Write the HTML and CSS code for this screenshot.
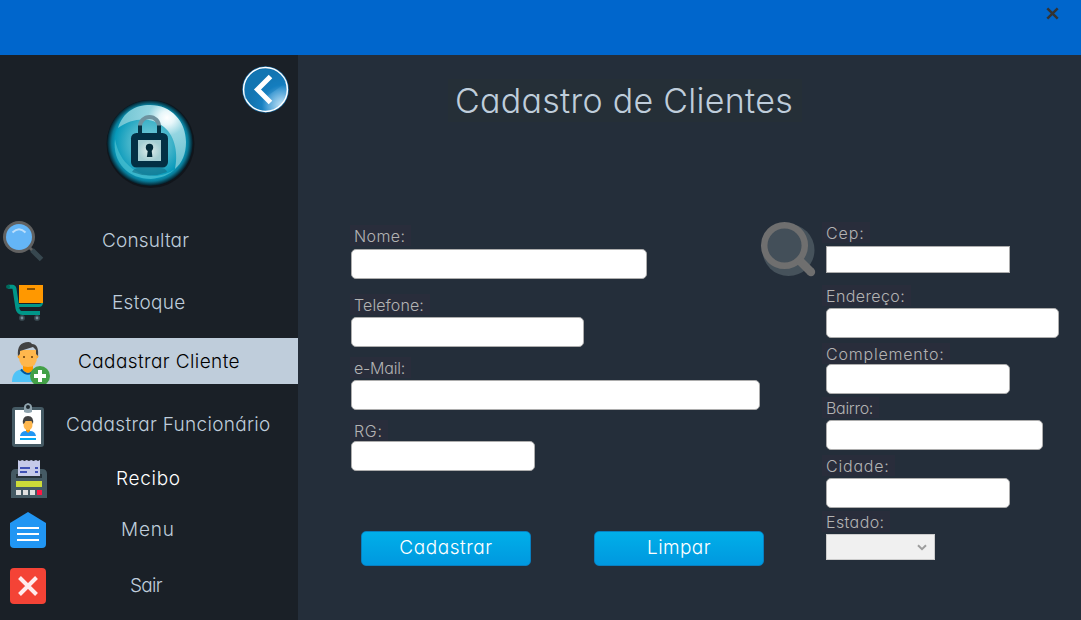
FILE: index.html
```html
<!DOCTYPE html>
<html lang="pt-BR">
<head>
<meta charset="utf-8">
<title>Cadastro de Clientes</title>
<link rel="stylesheet" href="styles.css">
</head>
<body>
<header class="titlebar">
  <svg class="close" viewBox="0 0 12 12"><path d="M1.2 1.2L10.8 10.8M10.8 1.2L1.2 10.8"/></svg>
</header>
<div class="layout">
  <aside class="sidebar">
    <div class="brand">
      <svg class="brand-art" viewBox="90 55 208 160">
        <defs>
          <radialGradient id="orb" cx=".5" cy=".5" r=".5"><stop offset="0" stop-color="#7fd0dc"/><stop offset=".5" stop-color="#41b3c9"/><stop offset=".82" stop-color="#0799ba"/><stop offset=".89" stop-color="#087b98"/><stop offset="1" stop-color="#061923"/></radialGradient>
          <radialGradient id="shine" cx=".72" cy=".2" r=".7"><stop offset="0" stop-color="#fff"/><stop offset=".15" stop-color="#e8f7fa"/><stop offset=".4" stop-color="#94d5e1"/><stop offset="1" stop-color="#6fc4d2"/></radialGradient>
          <radialGradient id="plate"><stop offset="0" stop-color="#e2eeec"/><stop offset="1" stop-color="#a3cdd2"/></radialGradient>
          <radialGradient id="back" cx=".88" cy=".86" r=".75"><stop offset="0" stop-color="#c5e5f8"/><stop offset=".45" stop-color="#4ca1d6"/><stop offset=".62" stop-color="#1780c1"/><stop offset="1" stop-color="#1372ac"/></radialGradient>
        </defs>
        <circle cx="150.500" cy="144" r="44" fill="#11151b"/>
        <circle cx="150" cy="143" r="43" fill="url(#orb)"/>
        <path d="M118 128C123 112 135 105 150 105C171 105 186 121 186 142C186 154 182 163 175 169C178 155 176 137 164 127C151 117 134 117 118 128Z" fill="url(#shine)"/>
        <path d="M115 139C112 163 129 179 151 179C161 178 169 175 175 169C155 184 121 174 115 139Z" fill="#49bfd0" opacity=".75"/>
        <path d="M132 172Q134 168 139 168H160Q166 168 167 172Q150 179 132 172Z" fill="#11718a" opacity=".65"/>
        <path d="M140 126.500A9.500 9.500 0 0 1 159 126.500" fill="none" stroke="#6e929f" stroke-width="4"/>
        <path d="M140 134V125.500M159 134V125.500" stroke="#033244" stroke-width="4"/>
        <rect x="131" y="133" width="37" height="34.500" rx="5.500" fill="#033044"/>
        <rect x="138" y="140" width="23" height="21" fill="url(#plate)"/>
        <circle cx="149.500" cy="147.500" r="3.700" fill="#032b3a"/><path d="M148 149h3.500l.9 8h-5.500z" fill="#032b3a"/>
        <circle cx="265.500" cy="89.500" r="23.300" fill="#176aa2"/>
        <circle cx="265.500" cy="89.500" r="21.900" fill="url(#back)" stroke="#fff" stroke-width="1.500"/>
        <path d="M244.500 98C253 105 270 96 286 82A22 22 0 0 0 245 84Z" fill="#117abc" opacity=".4"/>
        <path d="M270.500 76.500L257.500 89.500L270.500 102.500" fill="none" stroke="#fff" stroke-width="5"/>
      </svg>
    </div>
    <nav class="menu">
      <a class="item consultar"><svg class="icon" viewBox="0 215 52 50"><path d="M29 247l4 4" stroke="#616161" stroke-width="3"/><path d="M32 250L41.500 259.500" stroke="#37474f" stroke-width="5"/><circle cx="19" cy="237" r="16" fill="#616161"/><circle cx="19" cy="237" r="13" fill="#64b5f6"/><path d="M12.500 232.500Q19 226 25.500 232.500" fill="none" stroke="#bbdefb" stroke-width="2"/></svg><span class="text">Consultar</span></a>
      <a class="item estoque"><svg class="icon" viewBox="0 277 52 50"><path d="M8 286.800h4.500q1.500 0 2 2L17.500 308.500q.8 4.500 5 4.500H40" fill="none" stroke="#009688" stroke-width="4"/><path d="M18 304h21q3 0 4-4v3.500q-1 3.500-4 3.500H18z" fill="#009688"/><circle cx="8" cy="286.800" r="2" fill="#00695c"/><path d="M19 285h24v18H19z" fill="#ff9800"/><path d="M27 288h8v2h-8z" fill="#8a5000"/><circle cx="22" cy="318" r="3" fill="#37474f"/><circle cx="37" cy="318" r="3" fill="#37474f"/><circle cx="22" cy="318" r="1.400" fill="#78909c"/><circle cx="37" cy="318" r="1.400" fill="#78909c"/></svg><span class="text">Estoque</span></a>
      <a class="item cliente active"><svg class="icon" viewBox="0 338 52 46"><path d="M12 382Q12 370 23 369h10q11 1 11 13z" fill="#4fc3f7"/><path d="M21 369.500Q28 378 35 369.500" fill="none" stroke="#01579b" stroke-width="2"/><path d="M23 363h10v7q-5 6-10 0z" fill="#ff9800"/><path d="M19 350h18v7q0 10-9 10t-9-10z" fill="#ffb74d"/><path d="M17.500 355.500h2v3q-2 0-2-3m19 0h2q0 3-2 3z" fill="#ffa726"/><path d="M18 356q-1.500-14 10.500-14q2.500 0 3.500 2q7 0 6 12l-2-2v-4l-3-3-13 4v3z" fill="#424242"/><path d="M23 356h2v2h-2zm8 0h2v2h-2z" fill="#8a5a1c"/><circle cx="40" cy="376" r="10" fill="#43a047"/><path d="M38 370h4v4h4v4h-4v4h-4v-4h-4v-4h4z" fill="#fff"/></svg><span class="text">Cadastrar Cliente</span></a>
      <a class="item funcionario"><svg class="icon" viewBox="0 400 52 48"><rect x="12" y="407" width="32" height="40" rx="3" fill="#455a64"/><path d="M15 410h26v34H15z" fill="#fff"/><path d="M24 412v-5q0-3 4-4q4 1 4 4v5q-4 2-8 0z" fill="#90a4ae"/><circle cx="28" cy="407" r="2" fill="#1f2930"/><path d="M20 436q1-5 6-5h4q5 0 6 5z" fill="#2196f3"/><path d="M26 427h4v4l-2 2-2-2z" fill="#ff9800"/><path d="M23.500 420h9v4q0 6-4.500 6t-4.500-6z" fill="#ffb74d"/><path d="M23 424q-1-8 5-8q6 0 5 8l-1.500-3-6 0-1 2z" fill="#424242"/><path d="M20 438h16v2H20z" fill="#03a9f4"/></svg><span class="text">Cadastrar Funcionário</span></a>
      <a class="item recibo"><svg class="icon" viewBox="0 454 52 48"><path d="M11 498v-24q0-5 5-5h26q5 0 5 5v24z" fill="#455a64"/><path d="M16 474h26v4H16z" fill="#263238"/><path d="M18 460l2 1 2.200-1 2.300 1 2.200-1 2.300 1 2.200-1 2.300 1 2.500-1 2 1 2-1v16H18z" fill="#c5cae9"/><path d="M20 467h10v2H20zm15 0h3v2h-3zm-15 4h7v2h-7zm15 0h3v2h-3z" fill="#3f51b5"/><path d="M16 481h26v6H16z" fill="#cddc39"/><path d="M16 490h5v5h-5zm7 0h5v5h-5zm7 0h5v5h-5z" fill="#e0e0e0"/><path d="M37 490h5v5h-5z" fill="#ff1744"/></svg><span class="text">Recibo</span></a>
      <a class="item inicio"><svg class="icon" viewBox="0 505 52 48"><path d="M28 512l18 11v21q0 4-4 4H14q-4 0-4-4v-21z" fill="#2196f3"/><path d="M17 527h22v2H17zm0 6h22v2H17zm0 6h22v2H17z" fill="#fff"/></svg><span class="text">Menu</span></a>
      <a class="item sair"><svg class="icon" viewBox="0 561 52 48"><rect x="10" y="568" width="36" height="36" rx="4" fill="#f44336"/><path d="M19.500 577.500l17 17m0-17l-17 17" stroke="#ffebee" stroke-width="4"/></svg><span class="text">Sair</span></a>
    </nav>
  </aside>
  <main class="main">
    <h1 class="title"><span class="text">Cadastro de Clientes</span></h1>
    <div class="form">
      <section class="left">
        <div class="field nome"><label class="label"><span class="text">Nome:</span></label><input class="input"></div>
        <div class="field telefone"><label class="label"><span class="text">Telefone:</span></label><input class="input"></div>
        <div class="field email"><label class="label"><span class="text">e-Mail:</span></label><input class="input"></div>
        <div class="field rg"><label class="label"><span class="text">RG:</span></label><input class="input"></div>
        <div class="actions"><button class="button cadastrar"><span class="text">Cadastrar</span></button><button class="button limpar"><span class="text">Limpar</span></button></div>
      </section>
      <svg class="search" viewBox="760 221 56 56"><circle cx="788.500" cy="250" r="26" fill="#46525b"/><circle cx="784.500" cy="245.500" r="20.300" fill="#434f59" stroke="#6f6f6f" stroke-width="6.500"/><path d="M799 260L811 272" stroke="#6f6f6f" stroke-width="8.500"/><circle cx="811" cy="272" r="4.200" fill="#6f6f6f"/></svg>
      <section class="right">
        <div class="field cep"><label class="label"><span class="text">Cep:</span></label><input class="input"></div>
        <div class="field endereco"><label class="label"><span class="text">Endereço:</span></label><input class="input"></div>
        <div class="field complemento"><label class="label"><span class="text">Complemento:</span></label><input class="input"></div>
        <div class="field bairro"><label class="label"><span class="text">Bairro:</span></label><input class="input"></div>
        <div class="field cidade"><label class="label"><span class="text">Cidade:</span></label><input class="input"></div>
        <div class="field estado"><label class="label"><span class="text">Estado:</span></label><div class="select"><svg class="chevron" viewBox="0 0 10 7"><path d="M1 1.200L5 5.200L9 1.200"/></svg></div></div>
      </section>
    </div>
  </main>
</div>
</body>
</html>
```
FILE: styles.css
```css
* { box-sizing: border-box; }
body { margin: 0; width: 1081px; height: 620px; overflow: hidden; background: #242e3a; font-family: "Century Gothic", Inter, sans-serif; font-weight: 300; font-feature-settings: "cv11" 1; }
.text { display: block; white-space: nowrap; }
.titlebar { height: 55px; background: #0066cc; display: flex; justify-content: flex-end; padding: 7px 22px 0 0; }
.close { width: 13px; height: 13px; fill: none; stroke: #333; stroke-width: 2.3; }
.layout { display: grid; grid-template-columns: 298px 783px; height: 565px; }
.sidebar { background: #1a2027; }
.brand { height: 160px; padding-left: 90px; }
.brand-art { display: block; width: 208px; height: 160px; }
.menu { display: flex; flex-direction: column; }
.item { display: flex; align-items: center; height: 48px; color: #bfcddb; font-size: 19px; }
.icon { width: 52px; height: 100%; flex: none; }
.consultar { height: 50px; letter-spacing: .15px; }
.estoque { height: 50px; margin-top: 12px; letter-spacing: .3px; }
.cliente { height: 46px; margin-top: 11px; letter-spacing: .4px; }
.funcionario { margin-top: 16px; letter-spacing: .3px; }
.recibo { margin-top: 6px; color: #fff; letter-spacing: .7px; }
.inicio { margin-top: 3px; letter-spacing: .8px; }
.sair { margin-top: 8px; letter-spacing: -.7px; }
.active { background: #bfcddb; color: #000; }
.consultar .text { margin-left: 50px; }
.estoque .text { margin-left: 60px; }
.cliente .text { margin-left: 26px; }
.funcionario .text { margin-left: 14px; }
.recibo .text { margin-left: 64px; }
.inicio .text { margin-left: 69px; }
.sair .text { margin-left: 78px; }
.main { padding-top: 24px; }
.title { margin: 0 0 0 150px; width: 354px; height: 43px; padding-left: 7px; background: #252f37; color: #bfcddb; font-size: 34px; font-weight: 300; line-height: 43px; letter-spacing: .28px; }
.form { display: grid; grid-template-columns: 462px 62px 1fr; padding-top: 99px; }
.left { padding: 4px 0 0 52px; }
.right { padding-top: 1px; }
.field { display: flex; flex-direction: column; align-items: flex-start; }
.label { height: 21px; padding-left: 4px; background: #292d3b; color: #b3b3b3; font-size: 16px; line-height: 22px; letter-spacing: .4px; }
.input { width: 184px; height: 30px; margin: 3px 0 0 1px; padding: 0 6px; border: 1px solid #adadad; border-radius: 5px; background: #fff; }
.right .input { margin: 2px 0 0 4px; }
.nome .label { width: 61px; }
.nome .input { width: 296px; }
.telefone { margin-top: 15px; }
.telefone .label { width: 80px; letter-spacing: .1px; }
.telefone .input { width: 233px; margin-top: 2px; }
.email { margin-top: 10px; }
.email .label { width: 61px; letter-spacing: -.2px; }
.email .input { width: 409px; margin-top: 2px; }
.rg { margin-top: 10px; }
.rg .label { width: 38px; letter-spacing: .7px; }
.rg .input { margin-top: 0; }
.search { width: 56px; height: 56px; }
.cep .label { width: 48px; letter-spacing: .9px; }
.right .cep .input { height: 27px; margin-top: 3px; border-radius: 0; }
.endereco { margin-top: 12px; }
.endereco .label { width: 89px; }
.endereco .input { width: 233px; }
.complemento { margin-top: 5px; }
.complemento .label { width: 128px; letter-spacing: .8px; }
.right .complemento .input { margin-top: 0; }
.bairro { margin-top: 3px; }
.bairro .label { width: 57px; letter-spacing: -.3px; }
.bairro .input { width: 217px; }
.cidade { margin-top: 5px; }
.cidade .label { width: 73px; letter-spacing: .8px; }
.estado { margin-top: 3px; }
.estado .label { width: 68px; }
.select { display: flex; align-items: center; justify-content: flex-end; width: 109px; height: 26px; margin: 2px 0 0 4px; padding-right: 8px; background: #f0f0f0; box-shadow: inset 0 0 0 1px #ccc; }
.chevron { width: 10px; height: 7px; fill: none; stroke: #9d9d9d; stroke-width: 2; }
.actions { display: flex; gap: 63px; margin: 60px 0 0 11px; }
.button { width: 170px; height: 35px; flex: none; padding: 0 0 3px; border: 1px solid #087fc0; border-radius: 5px; background: linear-gradient(#00afe9, #0098df); color: #fff; font: inherit; font-feature-settings: inherit; font-size: 19px; display: flex; align-items: center; justify-content: center; }
.cadastrar { letter-spacing: .55px; }
.limpar { letter-spacing: .4px; }
```
